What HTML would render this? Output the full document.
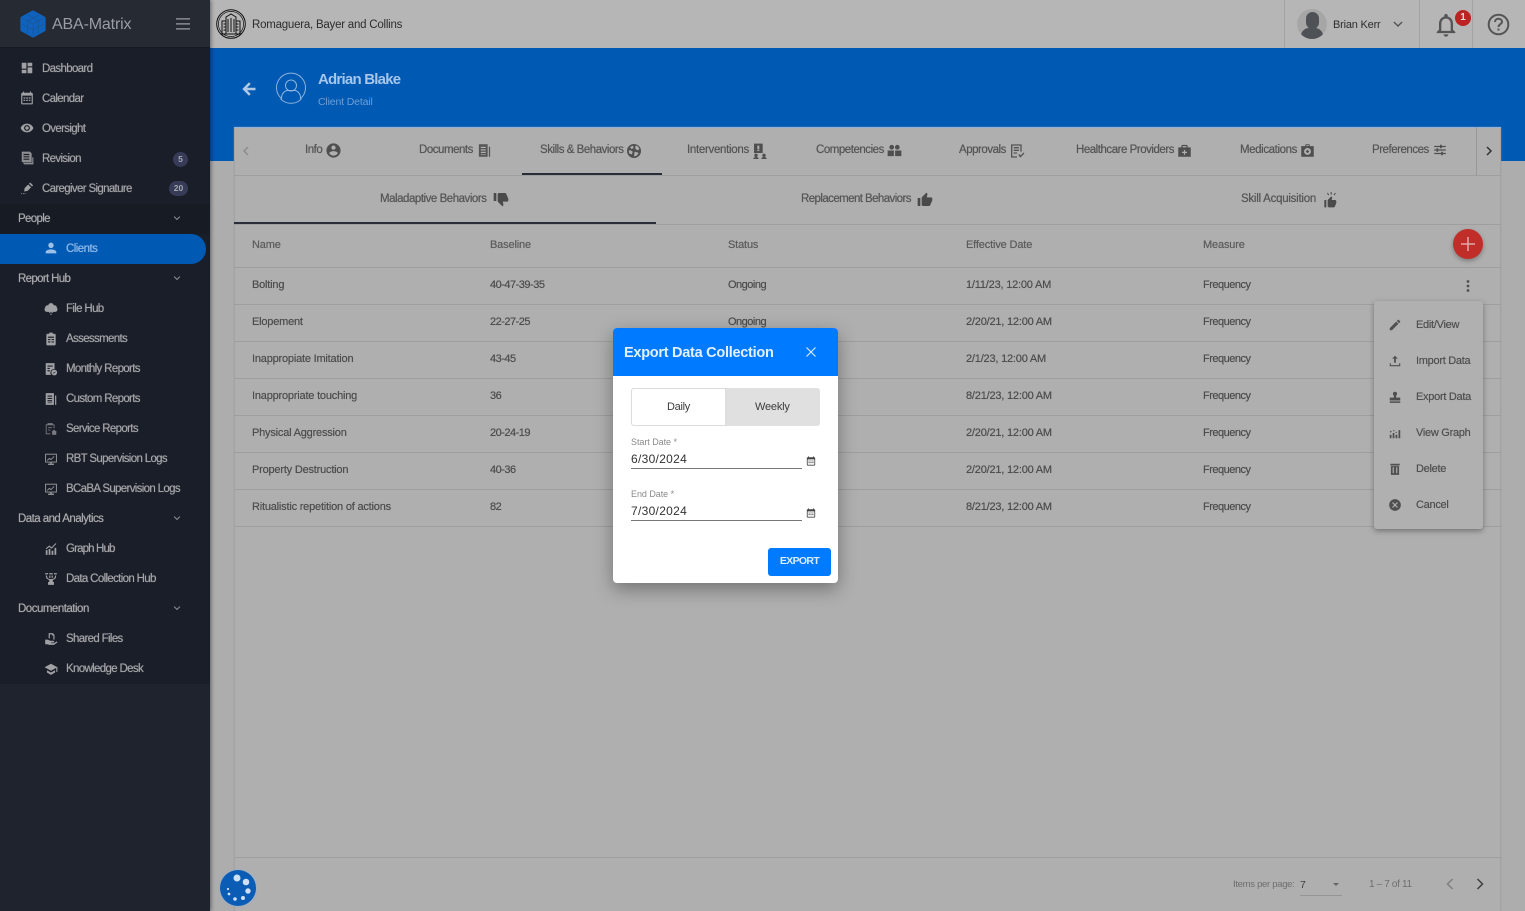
<!DOCTYPE html>
<html lang="en"><head><meta charset="utf-8"><title>ABA-Matrix</title>
<style>
html,body{margin:0;padding:0;width:1525px;height:911px;overflow:hidden;background:#adadad;font-family:"Liberation Sans",sans-serif}
.a{position:absolute}
.t{position:absolute;white-space:nowrap;line-height:14px;font-size:11.5px;letter-spacing:-.35px;margin-top:1px}
svg{position:absolute;overflow:visible}
.s{color:#a3a4a7;letter-spacing:-.66px;text-shadow:0 0 .6px currentColor}
.g{color:#a8a9ab;letter-spacing:-.66px;text-shadow:0 0 .6px currentColor}
.tab{color:#555;font-size:11.5px;letter-spacing:-.47px;text-shadow:0 0 .5px currentColor}
.td{color:#4d4d4d;font-size:11px;letter-spacing:-.2px;text-shadow:0 0 .4px currentColor}
.n{letter-spacing:-.5px}
.th{color:#5c5c5c;font-size:11px;letter-spacing:-.15px;text-shadow:0 0 .5px currentColor}
.ln{position:absolute;height:1px;background:#9e9e9e}
.m{color:#505050;font-size:11px;letter-spacing:-.28px;text-shadow:0 0 .4px currentColor}
</style></head><body>
<svg width="0" height="0" style="position:absolute"><defs>
<symbol id="dash" viewBox="0 0 24 24"><path d="M3 13h8V3H3v10zm0 8h8v-6H3v6zm10 0h8V11h-8v10zm0-18v6h8V3h-8z"/></symbol>
<symbol id="cal" viewBox="0 0 24 24"><path d="M20 3h-1V1h-2v2H7V1H5v2H4c-1.100 0-2 .9-2 2v16c0 1.100.9 2 2 2h16c1.100 0 2-.9 2-2V5c0-1.100-.9-2-2-2zm0 18H4V8h16v13zM6 11h3v2H6zm4.500 0h3v2h-3zm4.500 0h3v2h-3zM6 15h3v2H6zm4.500 0h3v2h-3zm4.500 0h3v2h-3z"/></symbol>
<symbol id="eye" viewBox="0 0 24 24"><path d="M12 4.500C7 4.500 2.730 7.610 1 12c1.730 4.390 6 7.500 11 7.500s9.270-3.110 11-7.500c-1.730-4.390-6-7.500-11-7.500zM12 17c-2.760 0-5-2.240-5-5s2.240-5 5-5 5 2.240 5 5-2.240 5-5 5zm0-8c-1.660 0-3 1.340-3 3s1.340 3 3 3 3-1.340 3-3-1.340-3-3-3z"/></symbol>
<symbol id="doc" viewBox="0 0 24 24"><path d="M3 1h14l3 3v15H3zm3 4v2h10V5zm0 4v2h10V9zm0 4v2h10v-2zM5 20h16v-9h2v12H7z"/></symbol>
<symbol id="sign" viewBox="0 0 24 24"><path d="M14 6l5 5-6 6-6 1 1-6zM15.500 4.500l2-2 5 5-2 2zM2 21h1.500v1.500H2zm3 0h1.500v1.500H5zm3 0h1.500v1.500H8z"/></symbol>
<symbol id="person" viewBox="0 0 24 24"><path d="M12 12c2.210 0 4-1.790 4-4s-1.790-4-4-4-4 1.790-4 4 1.790 4 4 4zm0 2c-2.670 0-8 1.340-8 4v2h16v-2c0-2.660-5.330-4-8-4z"/></symbol>
<symbol id="cloud" viewBox="0 0 24 24"><path d="M12 2a5 5 0 0 1 4.800 3.700A4 4 0 0 1 22 9.500a4 4 0 0 1 1 3.500 4 4 0 0 1-4 4h-3l-4 4-4-4H5a4 4 0 0 1-4-4 4 4 0 0 1 1-3.500 4 4 0 0 1 5.200-3.800A5 5 0 0 1 12 2zm-1 15v5h2v-5z"/></symbol>
<symbol id="clip" viewBox="0 0 24 24"><path d="M9 1h6v2h3a2 2 0 0 1 2 2v16a2 2 0 0 1-2 2H6a2 2 0 0 1-2-2V5a2 2 0 0 1 2-2h3zM7 8v2h10V8zm0 4v2h4v-2zm6 0v2h4v-2zm-6 4v2h4v-2zm6 0v2h4v-2z"/></symbol>
<symbol id="month" viewBox="0 0 24 24"><path d="M3 2h15v10a6.500 6.500 0 0 0-6 10H3zm3 4v2h9V6zm0 4v2h4v-2zm0 4v2h4v-2zm11.500-1a5 5 0 1 1 0 10 5 5 0 0 1 0-10zm-2.500 5l2 2 3-3-.7-.7-2.300 2.300-1.300-1.300z"/></symbol>
<symbol id="rep" viewBox="0 0 24 24"><path d="M3 2h14v20H3zm3 4v2h8V6zm0 4v2h8v-2zm0 4v2h8v-2zm0 4v1h8v-1zM19 6h2v16h-2z"/></symbol>
<symbol id="serv" viewBox="0 0 24 24" opacity=".7"><path d="M6 2h9v2h3v7h-1.500V5.500h-12v14H11V21H3V4h3zm1 7h7v1.500H7zm0 4h4v1.500H7zm10 0l5 4-1 1v4h-7v-4l-1-1z"/></symbol>
<symbol id="mon" viewBox="0 0 24 24"><path d="M2 3h20v15h-9v2h4v2H7v-2h4v-2H2zm1.500 1.500v12h17v-12zM5 14l4-4 3 2 5-5 1 1-6 6-3-2-3 3z"/></symbol>
<symbol id="graph" viewBox="0 0 24 24"><path d="M3 14h3v8H3zm5-2h3v10H8zm5 3h3v7h-3zm5-5h3v12h-3zM3 11l6-5 4 3 7-7 1.200 1.200L13 11.500 9 8.500 4 12.500z"/></symbol>
<symbol id="data" viewBox="0 0 24 24"><path d="M2 2h5v2H2zm7 0h6v2H9zm8 0h5v2h-5zM3 6h2l1 4 3 2h6l3-2 1-4h2l-1 5-5 3v3h2v5H7v-5h2v-3l-5-3zM9 6h2v4H9zm4 0h2v4h-2z"/></symbol>
<symbol id="share" viewBox="0 0 24 24"><path d="M8 2h7l3 3v8h-2V6h-2V4H10v7H8zM2 13h4l5 2h5a1.500 1.500 0 0 1 0 3h-4v1h5l5-3 1 2-6 4H9l-3-1H2z"/></symbol>
<symbol id="cap" viewBox="0 0 24 24"><path d="M12 3L1 9l11 6 9-4.900V17h2V9zM5 14.200V18l7 4 7-4v-3.800L12 18z"/></symbol>
<symbol id="acc" viewBox="0 0 24 24"><path d="M12 2C6.480 2 2 6.480 2 12s4.480 10 10 10 10-4.480 10-10S17.520 2 12 2zm0 3c1.660 0 3 1.340 3 3s-1.340 3-3 3-3-1.340-3-3 1.340-3 3-3zm0 14.200c-2.500 0-4.710-1.280-6-3.220.030-1.990 4-3.080 6-3.080 1.990 0 5.970 1.090 6 3.080-1.290 1.940-3.500 3.220-6 3.220z"/></symbol>
<symbol id="brain" viewBox="0 0 24 24"><path d="M12 1.500a10.500 10.500 0 1 1 0 21 10.500 10.500 0 0 1 0-21zM11 4L6 6l2 3 3-1zm3 0v5l4 2 2-2-2-4zM4 11l1 5 4 1 1-4-3-2zm9 2l-1 7 4-1 3-4-2-1z" fill-rule="evenodd"/></symbol>
<symbol id="interv" viewBox="0 0 24 24"><path d="M3 1h13v14H3zm5 3v5h3V4zm0 6v2h3v-2zM6 16a2.500 2.500 0 1 1 0 5 2.500 2.500 0 0 1 0-5zm-4 8c0-2 2-3 4-3s4 1 4 3zm16-8a2.500 2.500 0 1 1 0 5 2.500 2.500 0 0 1 0-5zm-4 8c0-2 2-3 4-3s4 1 4 3z"/></symbol>
<symbol id="group" viewBox="0 0 24 24"><path d="M7.500 3a3.800 3.800 0 1 1 0 7.600 3.800 3.800 0 0 1 0-7.600zm9 0a3.800 3.800 0 1 1 0 7.600 3.800 3.800 0 0 1 0-7.600zM1 12h10v9H1zm12 0h10v9H13z"/></symbol>
<symbol id="appr" viewBox="0 0 24 24"><path d="M3 2h16v11h-2V4H5v16h7v2H3zm4 4h8v2H7zm0 4h8v2H7zm0 4h5v2H7zm7 4l1.500-1.500 2 2 4.500-4.500L23 16l-6 6z"/></symbol>
<symbol id="bag" viewBox="0 0 24 24"><path d="M9 3h6a2 2 0 0 1 2 2v2h5v15H2V7h5V5a2 2 0 0 1 2-2zm0 2v2h6V5zm2 6v3H8v2h3v3h2v-3h3v-2h-3v-3z" fill-rule="evenodd"/></symbol>
<symbol id="med" viewBox="0 0 24 24"><path d="M9 2h6l1 3h6v17H2V5h6zm1 1.500V5h4V3.500zM12 8a5.500 5.500 0 1 0 0 11 5.500 5.500 0 0 0 0-11zm-1 3h2v1.500h1.500v2H13V16h-2v-1.500H9.500v-2H11z" fill-rule="evenodd"/></symbol>
<symbol id="tune" viewBox="0 0 24 24"><path d="M2 5h10V3h3v2h7v2h-7v2h-3V7H2zm0 6h4V9h3v2h13v2H9v2H6v-2H2zm0 6h12v-2h3v2h5v2h-5v2h-3v-2H2z"/></symbol>
<symbol id="down" viewBox="0 0 24 24"><path d="M15 3H6c-.83 0-1.540.5-1.840 1.220l-3.020 7.050c-.09.230-.14.470-.14.730v2c0 1.100.9 2 2 2h6.310l-.95 4.570-.03.320c0 .41.170.79.440 1.060L9.830 23l6.590-6.590c.36-.36.580-.86.580-1.410V5c0-1.100-.9-2-2-2zm4 0v12h4V3h-4z" transform="translate(24 0) scale(-1 1)"/></symbol>
<symbol id="up" viewBox="0 0 24 24"><path d="M1 21h4V9H1v12zm22-11c0-1.100-.9-2-2-2h-6.310l.95-4.570.03-.32c0-.41-.17-.79-.44-1.060L14.170 1 7.590 7.590C7.220 7.950 7 8.450 7 9v10c0 1.100.9 2 2 2h9c.83 0 1.540-.5 1.840-1.220l3.020-7.050c.09-.23.14-.47.14-.73v-2z"/></symbol>
<symbol id="up2" viewBox="0 0 24 24"><path d="M5 23h3V12H5zm18-9c0-1-.8-2-2-2h-5l.8-3.500c0-.4-.1-.8-.4-1L15.500 6.500 10 12v9c0 1 .9 2 2 2h7c.8 0 1.500-.5 1.800-1.200l2-5c.1-.3.2-.5.200-.8zM14.500 0h1.500v4h-1.500zM9 2l1.200-.8 2 3-1.200.8zm12-.8L22.200 2l-2 3-1.200-.8z"/></symbol>
<symbol id="edit" viewBox="0 0 24 24"><path d="M3 17.250V21h3.750L17.810 9.940l-3.750-3.750L3 17.250zM20.710 7.040c.39-.39.390-1.020 0-1.410l-2.340-2.340c-.39-.39-1.020-.39-1.410 0l-1.830 1.830 3.750 3.750 1.830-1.830z"/></symbol>
<symbol id="imp" viewBox="0 0 24 24"><path d="M12 3l5 5h-3.500v7h-3V8H7zM3 16h2v3h14v-3h2v5H3z"/></symbol>
<symbol id="exp" viewBox="0 0 24 24"><path d="M12 3a3.500 3.500 0 0 1 2 6.400V13h7v5H3v-5h7V9.400A3.500 3.500 0 0 1 12 3zM3 19.500h18V22H3z"/></symbol>
<symbol id="vg" viewBox="0 0 24 24"><path d="M3 15h3v6H3zm5-3h3v9H8zm5 3h3v6h-3zm5-8h3v14h-3zM3 10l2-2 1.500 1.500-2 2zm6-3h2v2H9zm4 3h2v2h-2z"/></symbol>
<symbol id="del" viewBox="0 0 24 24"><path d="M4 3h16v3H4zm1 4h14v15H5zm3 2v10h2V9zm6 0v10h2V9z"/></symbol>
<symbol id="can" viewBox="0 0 24 24"><path d="M12 2C6.470 2 2 6.470 2 12s4.470 10 10 10 10-4.470 10-10S17.530 2 12 2zm5 13.590L15.590 17 12 13.410 8.410 17 7 15.590 10.590 12 7 8.410 8.410 7 12 10.590 15.590 7 17 8.410 13.410 12 17 15.590z"/></symbol>
<symbol id="chev" viewBox="0 0 24 24"><path d="M5 8.500l7 7 7-7" fill="none" stroke="currentColor" stroke-width="2.400"/></symbol>
</defs></svg>

<!-- main -->
<div class="a" style="left:210px;top:48px;width:1315px;height:113px;background:#0059b2"></div>
<div class="a" style="left:210px;top:0;width:1315px;height:48px;background:#b6b6b6"></div>
<div class="a" style="left:1284px;top:0;width:1px;height:48px;background:#a3a3a3"></div>
<div class="a" style="left:1419px;top:0;width:1px;height:48px;background:#a3a3a3"></div>
<div class="a" style="left:1472px;top:0;width:1px;height:48px;background:#a3a3a3"></div>

<!-- company logo -->
<svg style="left:216px;top:9px" width="30" height="30" viewBox="0 0 30 30" fill="none" stroke="#111" stroke-width="1"><circle cx="15" cy="15" r="14.300"/><circle cx="15" cy="15" r="12.600" stroke-width=".7"/><path d="M10 25V8l5-3 5 3v17M6 25V12h4M20 12h4v13M5 25h20M12 10v13M15 9v14M18 10v13M7.500 15h2M7.500 18h2M7.500 21h2M20.500 15h2M20.500 18h2M20.500 21h2"/></svg>
<div class="t" style="left:252px;top:17px;color:#2d2d2d;font-size:11.5px;letter-spacing:-.23px">Romaguera, Bayer and Collins</div>

<!-- user -->
<div class="a" style="left:1297px;top:9px;width:30px;height:30px;border-radius:50%;background:#a6a6a6;overflow:hidden">
<div class="a" style="left:8.500px;top:3px;width:13px;height:17px;border-radius:6.500px;background:#4e5155"></div>
<div class="a" style="left:4px;top:19px;width:22px;height:12px;border-radius:8px 8px 0 0;background:#4e5155"></div></div>
<div class="t" style="left:1333px;top:17px;color:#2d2d2d;font-size:11px;letter-spacing:-.2px">Brian Kerr</div>
<svg style="left:1391px;top:17px;color:#555" width="14" height="14"><use href="#chev"/></svg>
<svg style="left:1432px;top:11px" width="28" height="28" viewBox="0 0 24 24" fill="#555"><path d="M12 22c1.100 0 2-.9 2-2h-4c0 1.100.9 2 2 2zm6-6v-5c0-3.070-1.630-5.640-4.500-6.320V4c0-.83-.67-1.500-1.500-1.500s-1.500.67-1.500 1.500v.68C7.640 5.360 6 7.920 6 11v5l-2 2v1h16v-1l-2-2zm-2 1H8v-6c0-2.480 1.510-4.500 4-4.500s4 2.020 4 4.500v6z"/></svg>
<div class="a" style="left:1455px;top:10px;width:16px;height:16px;border-radius:50%;background:#bc2323;color:#ddd;font-size:10px;font-weight:bold;line-height:16px;text-align:center">1</div>
<svg style="left:1487px;top:13px" width="23" height="23" viewBox="0 0 23 23" fill="none" stroke="#555" stroke-width="2"><circle cx="11.500" cy="11.500" r="9.800"/><path d="M8 9c0-2 1.500-3.200 3.500-3.200S15 7 15 8.700c0 2.500-3.500 2.500-3.500 5.300M11.500 15.500v2"/></svg>

<!-- title area -->
<svg style="left:240px;top:80px" width="18" height="18" viewBox="0 0 24 24" fill="#b0c8e4" stroke="#b0c8e4" stroke-width="1.300"><path d="M20 11H7.830l5.590-5.590L12 4l-8 8 8 8 1.410-1.410L7.830 13H20v-2z"/></svg>
<svg style="left:276px;top:74px" width="30" height="30" viewBox="0 0 30 30" fill="none" stroke="#8fb5e0" stroke-width="1"><path d="M24 25A14.500 14.500 0 1 0 6 25"/><path d="M4.500 24.800a14.500 14.500 0 0 0 21 0"/><circle cx="15" cy="11.500" r="5.500"/><path d="M5.500 24c0-5 4-7.500 6-7.500h7c2.500 0 6 2.500 6 7.500"/></svg>
<div class="t" style="left:318px;top:71px;color:#a7c6ea;font-size:15px;line-height:16px;font-weight:bold;letter-spacing:-.78px">Adrian Blake</div>
<div class="t" style="left:318px;top:94px;color:#6f9fd8;font-size:10.500px;letter-spacing:-.15px">Client Detail</div>

<!-- card -->
<div class="a" style="left:234px;top:127px;width:1267px;height:784px;background:#afafaf;box-shadow:0 0 1px #999;border-right:1px solid #a3a3a3;border-left:1px solid #a3a3a3;box-sizing:border-box"></div>
<div class="a" style="left:234px;top:127px;width:1267px;height:1px;background:#8eb4de"></div>
<div class="ln" style="left:234px;top:175px;width:1267px"></div>
<div class="ln" style="left:234px;top:224px;width:1267px"></div>
<div class="ln" style="left:234px;top:267px;width:1267px"></div>
<div class="ln" style="left:234px;top:304px;width:1267px"></div>
<div class="ln" style="left:234px;top:341px;width:1267px"></div>
<div class="ln" style="left:234px;top:378px;width:1267px"></div>
<div class="ln" style="left:234px;top:415px;width:1267px"></div>
<div class="ln" style="left:234px;top:452px;width:1267px"></div>
<div class="ln" style="left:234px;top:489px;width:1267px"></div>
<div class="ln" style="left:234px;top:526px;width:1267px"></div>
<div class="ln" style="left:234px;top:857px;width:1267px"></div>
<div class="a" style="left:1476px;top:127px;width:1px;height:48px;background:#989898"></div>

<!-- tabs -->
<svg style="left:240px;top:145px;color:#8a8a8a" width="12" height="12" viewBox="0 0 12 12" fill="none" stroke="currentColor" stroke-width="1.400"><path d="M8 2L4 6l4 4"/></svg>
<svg style="left:1483px;top:145px" width="12" height="12" viewBox="0 0 12 12" fill="none" stroke="#333" stroke-width="1.500"><path d="M4 2l4 4-4 4"/></svg>
<div class="t tab" style="left:305px;top:142px">Info</div><svg style="left:325px;top:142px" width="17" height="17" fill="#4f4f4f"><use href="#acc"/></svg>
<div class="t tab" style="left:419px;top:142px">Documents</div><svg style="left:477px;top:143px" width="15" height="15" fill="#555"><use href="#rep"/></svg>
<div class="t tab" style="left:540px;top:142px">Skills &amp; Behaviors</div><svg style="left:626px;top:143px" width="16" height="16" fill="#4f4f4f"><use href="#brain"/></svg>
<div class="t tab" style="left:687px;top:142px;letter-spacing:-.3px">Interventions</div><svg style="left:752px;top:143px" width="16" height="16" fill="#4f4f4f"><use href="#interv"/></svg>
<div class="t tab" style="left:816px;top:142px">Competencies</div><svg style="left:887px;top:143px" width="15" height="15" fill="#4f4f4f"><use href="#group"/></svg>
<div class="t tab" style="left:959px;top:142px">Approvals</div><svg style="left:1009px;top:143px" width="16" height="16" fill="#555"><use href="#appr"/></svg>
<div class="t tab" style="left:1076px;top:142px">Healthcare Providers</div><svg style="left:1177px;top:143px" width="15" height="15" fill="#4f4f4f"><use href="#bag"/></svg>
<div class="t tab" style="left:1240px;top:142px;letter-spacing:-.4px">Medications</div><svg style="left:1300px;top:143px" width="15" height="15" fill="#4f4f4f"><use href="#med"/></svg>
<div class="t tab" style="left:1372px;top:142px">Preferences</div><svg style="left:1433px;top:143px" width="14" height="14" fill="#4f4f4f"><use href="#tune"/></svg>
<div class="a" style="left:522px;top:173px;width:140px;height:2px;background:#2a2d38"></div>

<!-- sub tabs -->
<div class="t tab" style="left:380px;top:191px">Maladaptive Behaviors</div><svg style="left:493px;top:191px" width="16" height="16" fill="#4a4a4a"><use href="#down"/></svg>
<div class="t tab" style="left:801px;top:191px;letter-spacing:-.58px">Replacement Behaviors</div><svg style="left:917px;top:192px" width="16" height="16" fill="#4a4a4a"><use href="#up"/></svg>
<div class="t tab" style="left:1241px;top:191px;letter-spacing:-.25px">Skill Acquisition</div><svg style="left:1321px;top:192px" width="16" height="16" fill="#4a4a4a"><use href="#up2"/></svg>
<div class="a" style="left:234px;top:222px;width:422px;height:2px;background:#2a2d38"></div>

<!-- table -->
<div class="t th" style="left:252px;top:237px">Name</div>
<div class="t th" style="left:490px;top:237px">Baseline</div>
<div class="t th" style="left:728px;top:237px">Status</div>
<div class="t th" style="left:966px;top:237px">Effective Date</div>
<div class="t th" style="left:1203px;top:237px">Measure</div>
<div class="a" style="left:1453px;top:229px;width:30px;height:30px;border-radius:50%;background:#c12e29;box-shadow:0 2px 5px rgba(0,0,0,.3)"></div>
<svg style="left:1460px;top:236px" width="16" height="16" fill="none" stroke="#e0a9a7" stroke-width="1.500"><path d="M8 1v14M1 8h14"/></svg>

<div class="t td" style="left:252px;top:277px">Bolting</div><div class="t td n" style="left:490px;top:277px">40-47-39-35</div><div class="t td n" style="left:728px;top:277px">Ongoing</div><div class="t td" style="left:966px;top:277px">1/11/23, 12:00 AM</div><div class="t td n" style="left:1203px;top:277px">Frequency</div>
<div class="t td" style="left:252px;top:314px">Elopement</div><div class="t td n" style="left:490px;top:314px">22-27-25</div><div class="t td n" style="left:728px;top:314px">Ongoing</div><div class="t td" style="left:966px;top:314px">2/20/21, 12:00 AM</div><div class="t td n" style="left:1203px;top:314px">Frequency</div>
<div class="t td" style="left:252px;top:351px">Inappropiate Imitation</div><div class="t td n" style="left:490px;top:351px">43-45</div><div class="t td" style="left:966px;top:351px">2/1/23, 12:00 AM</div><div class="t td n" style="left:1203px;top:351px">Frequency</div>
<div class="t td" style="left:252px;top:388px">Inappropriate touching</div><div class="t td n" style="left:490px;top:388px">36</div><div class="t td" style="left:966px;top:388px">8/21/23, 12:00 AM</div><div class="t td n" style="left:1203px;top:388px">Frequency</div>
<div class="t td" style="left:252px;top:425px">Physical Aggression</div><div class="t td n" style="left:490px;top:425px">20-24-19</div><div class="t td" style="left:966px;top:425px">2/20/21, 12:00 AM</div><div class="t td n" style="left:1203px;top:425px">Frequency</div>
<div class="t td" style="left:252px;top:462px">Property Destruction</div><div class="t td n" style="left:490px;top:462px">40-36</div><div class="t td" style="left:966px;top:462px">2/20/21, 12:00 AM</div><div class="t td n" style="left:1203px;top:462px">Frequency</div>
<div class="t td" style="left:252px;top:499px">Ritualistic repetition of actions</div><div class="t td n" style="left:490px;top:499px">82</div><div class="t td" style="left:966px;top:499px">8/21/23, 12:00 AM</div><div class="t td n" style="left:1203px;top:499px">Frequency</div>
<svg style="left:1464px;top:279px" width="8" height="14" fill="#505050"><circle cx="4" cy="2.500" r="1.400"/><circle cx="4" cy="7" r="1.400"/><circle cx="4" cy="11.500" r="1.400"/></svg>

<!-- context menu -->
<div class="a" style="left:1374px;top:301px;width:109px;height:228px;background:#b0b0b0;border-radius:3px;box-shadow:0 2px 6px rgba(0,0,0,.35)"></div>
<svg style="left:1388px;top:318px" width="14" height="14" fill="#4f4f4f"><use href="#edit"/></svg><div class="t m" style="left:1416px;top:317px">Edit/View</div>
<svg style="left:1388px;top:354px" width="14" height="14" fill="#4f4f4f"><use href="#imp"/></svg><div class="t m" style="left:1416px;top:353px">Import Data</div>
<svg style="left:1388px;top:390px" width="14" height="14" fill="#4f4f4f"><use href="#exp"/></svg><div class="t m" style="left:1416px;top:389px">Export Data</div>
<svg style="left:1388px;top:426px" width="14" height="14" fill="#4f4f4f"><use href="#vg"/></svg><div class="t m" style="left:1416px;top:425px">View Graph</div>
<svg style="left:1388px;top:462px" width="14" height="14" fill="#4f4f4f"><use href="#del"/></svg><div class="t m" style="left:1416px;top:461px">Delete</div>
<svg style="left:1388px;top:498px" width="14" height="14" fill="#4f4f4f"><use href="#can"/></svg><div class="t m" style="left:1416px;top:497px">Cancel</div>

<!-- paginator -->
<div class="t" style="left:1233px;top:877px;color:#6e6e6e;font-size:9.500px;letter-spacing:-.3px">Items per page:</div>
<div class="t" style="left:1300px;top:877px;color:#3d3d3d;font-size:10.500px">7</div>
<div class="a" style="left:1333px;top:883px;border:3.500px solid transparent;border-top:3.500px solid #666;border-bottom:0"></div>
<div class="a" style="left:1300px;top:895px;width:42px;height:1px;background:#959595"></div>
<div class="t" style="left:1369px;top:877px;color:#6e6e6e;font-size:10px;letter-spacing:-.35px">1 – 7 of 11</div>
<svg style="left:1444px;top:878px" width="12" height="12" viewBox="0 0 12 12" fill="none" stroke="#7e7e7e" stroke-width="1.500"><path d="M8.500 1L3.500 6l5 5"/></svg>
<svg style="left:1474px;top:878px" width="12" height="12" viewBox="0 0 12 12" fill="none" stroke="#3f3f3f" stroke-width="1.500"><path d="M3.500 1l5 5-5 5"/></svg>

<!-- cookie -->
<div class="a" style="left:220px;top:870px;width:36px;height:36px;border-radius:50%;background:#0b5cb5;box-shadow:0 0 1px 1px rgba(143,178,216,.55)"></div>
<svg style="left:220px;top:870px" width="36" height="36" fill="#cfe0f3"><circle cx="17" cy="8" r="3.500"/><circle cx="26" cy="12" r="3.300"/><circle cx="28" cy="21" r="2.700"/><circle cx="23" cy="28" r="2"/><circle cx="15" cy="29" r="1.800"/><circle cx="9" cy="24" r="1.400"/><circle cx="8" cy="19" r="1.100"/></svg>

<!-- modal -->
<div class="a" style="left:613px;top:328px;width:225px;height:255px;background:#fff;border-radius:4px;box-shadow:0 6px 18px rgba(0,0,0,.35);overflow:hidden">
<div class="a" style="left:0;top:0;width:225px;height:48px;background:#007bff"></div></div>
<div class="t" style="left:624px;top:344px;color:#e3f0ff;font-size:14.500px;line-height:16px;font-weight:bold;letter-spacing:-.27px">Export Data Collection</div>
<svg style="left:806px;top:347px" width="10" height="10" fill="none" stroke="#d5e8ff" stroke-width="1.200"><path d="M.5.500l9 9M9.500.500l-9 9"/></svg>
<div class="a" style="left:631px;top:388px;width:189px;height:38px;background:#e0e0e0;border-radius:3px"></div>
<div class="a" style="left:631px;top:388px;width:93px;height:36px;background:#fff;border:1px solid #dcdcdc;border-radius:3px 0 0 3px"></div>
<div class="t" style="left:667px;top:399px;color:#3c3c3c;font-size:11px;letter-spacing:-.3px">Daily</div>
<div class="t" style="left:755px;top:399px;color:#3c3c3c;font-size:11px;letter-spacing:-.2px">Weekly</div>
<div class="t" style="left:631px;top:434px;color:#8a8a8a;font-size:9px;letter-spacing:-.05px">Start Date *</div>
<div class="t" style="left:631px;top:451px;color:#333;font-size:12px;letter-spacing:.3px">6/30/2024</div>
<div class="a" style="left:631px;top:468px;width:171px;height:1px;background:#777"></div>
<svg style="left:806px;top:456px" width="10" height="10" fill="#444"><use href="#cal"/></svg>
<div class="t" style="left:631px;top:486px;color:#8a8a8a;font-size:9px;letter-spacing:-.05px">End Date *</div>
<div class="t" style="left:631px;top:503px;color:#333;font-size:12px;letter-spacing:.3px">7/30/2024</div>
<div class="a" style="left:631px;top:520px;width:171px;height:1px;background:#777"></div>
<svg style="left:806px;top:508px" width="10" height="10" fill="#444"><use href="#cal"/></svg>
<div class="a" style="left:768px;top:548px;width:63px;height:28px;background:#007bff;border-radius:3px;color:#dcecff;font-size:10.500px;font-weight:bold;line-height:27px;text-align:center;letter-spacing:-.65px">EXPORT</div>

<!-- sidebar -->
<div class="a" style="left:0;top:0;width:210px;height:911px;background:#1e232d;box-shadow:1px 0 4px rgba(0,0,0,.45)"></div>
<div class="a" style="left:0;top:0;width:210px;height:48px;background:#262a33;border-bottom:1px solid #171a21;box-sizing:border-box"></div>
<div class="a" style="left:0;top:48px;width:210px;height:636px;background:#1a1e28"></div>
<svg style="left:19px;top:10px" width="28" height="28" viewBox="0 0 30 30"><path d="M15 2l12 6.500v13L15 28 3 21.500v-13z" fill="#0f62bd" stroke="#0f62bd" stroke-width="3" stroke-linejoin="round"/><path d="M3 8.500l12 6.500 12-6.500M15 15v13M9 5.300l12 6.500M21 5.300L9 11.800M9 11.800v13M21 11.800v13M3 15l12 6.500L27 15" stroke="#1c5596" stroke-width=".8" fill="none"/></svg>
<div class="t" style="left:52px;top:16px;color:#9b9da3;font-size:16px;line-height:16px;letter-spacing:-.15px">ABA-Matrix</div>
<svg style="left:176px;top:18px" width="14" height="12" fill="#7d7f85"><rect width="14" height="1.700"/><rect y="5" width="14" height="1.700"/><rect y="10" width="14" height="1.700"/></svg>

<svg style="left:20px;top:61px" width="14" height="14" fill="#a0a1a4"><use href="#dash"/></svg><div class="t s" style="left:42px;top:61px">Dashboard</div>
<svg style="left:20px;top:91px" width="14" height="14" fill="#a0a1a4"><use href="#cal"/></svg><div class="t s" style="left:42px;top:91px">Calendar</div>
<svg style="left:20px;top:121px" width="14" height="14" fill="#a0a1a4"><use href="#eye"/></svg><div class="t s" style="left:42px;top:121px">Oversight</div>
<svg style="left:20px;top:151px" width="14" height="14" fill="#8d8e91"><use href="#doc"/></svg><div class="t s" style="left:42px;top:151px">Revision</div>
<svg style="left:20px;top:181px" width="14" height="14" fill="#a0a1a4"><use href="#sign"/></svg><div class="t s" style="left:42px;top:181px">Caregiver Signature</div>
<div class="a" style="left:173px;top:152px;width:15px;height:15px;border-radius:50%;background:#373b58;color:#a6a8b0;font-size:8.500px;font-weight:bold;line-height:15px;text-align:center">5</div>
<div class="a" style="left:169px;top:181px;width:19px;height:15px;border-radius:8px;background:#373b58;color:#a6a8b0;font-size:8.500px;font-weight:bold;line-height:15px;text-align:center">20</div>

<div class="a" style="left:0;top:204px;width:210px;height:30px;background:#171b24"></div>
<div class="t g" style="left:18px;top:211px">People</div>
<svg style="left:172px;top:213px;color:#95969a" width="10" height="10"><use href="#chev"/></svg>
<div class="a" style="left:0;top:234px;width:206px;height:30px;background:#0059b2;border-radius:0 15px 15px 0"></div>
<svg style="left:43px;top:240px" width="16" height="16" fill="#9fc0e6"><use href="#person"/></svg>
<div class="t" style="left:66px;top:241px;color:#8fb9ea;letter-spacing:-.55px;text-shadow:0 0 .6px currentColor">Clients</div>

<div class="t g" style="left:18px;top:271px">Report Hub</div>
<svg style="left:172px;top:273px;color:#95969a" width="10" height="10"><use href="#chev"/></svg>
<svg style="left:44px;top:302px" width="14" height="14" fill="#a0a1a4"><use href="#cloud"/></svg><div class="t s" style="left:66px;top:301px">File Hub</div>
<svg style="left:44px;top:332px" width="14" height="14" fill="#a0a1a4"><use href="#clip"/></svg><div class="t s" style="left:66px;top:331px">Assessments</div>
<svg style="left:44px;top:362px" width="14" height="14" fill="#a0a1a4"><use href="#month"/></svg><div class="t s" style="left:66px;top:361px">Monthly Reports</div>
<svg style="left:44px;top:392px" width="14" height="14" fill="#a0a1a4"><use href="#rep"/></svg><div class="t s" style="left:66px;top:391px">Custom Reports</div>
<svg style="left:44px;top:422px" width="14" height="14" fill="#a0a1a4"><use href="#serv"/></svg><div class="t s" style="left:66px;top:421px">Service Reports</div>
<svg style="left:44px;top:452px" width="14" height="14" fill="#a0a1a4"><use href="#mon"/></svg><div class="t s" style="left:66px;top:451px">RBT Supervision Logs</div>
<svg style="left:44px;top:482px" width="14" height="14" fill="#a0a1a4"><use href="#mon"/></svg><div class="t s" style="left:66px;top:481px">BCaBA Supervision Logs</div>
<div class="t g" style="left:18px;top:511px;letter-spacing:-.55px">Data and Analytics</div>
<svg style="left:172px;top:513px;color:#95969a" width="10" height="10"><use href="#chev"/></svg>
<svg style="left:44px;top:542px" width="14" height="14" fill="#a0a1a4"><use href="#graph"/></svg><div class="t s" style="left:66px;top:541px;letter-spacing:-.85px">Graph Hub</div>
<svg style="left:44px;top:572px" width="14" height="14" fill="#a0a1a4"><use href="#data"/></svg><div class="t s" style="left:66px;top:571px">Data Collection Hub</div>
<div class="t g" style="left:18px;top:601px;letter-spacing:-.5px">Documentation</div>
<svg style="left:172px;top:603px;color:#95969a" width="10" height="10"><use href="#chev"/></svg>
<svg style="left:44px;top:632px" width="14" height="14" fill="#a0a1a4"><use href="#share"/></svg><div class="t s" style="left:66px;top:631px">Shared Files</div>
<svg style="left:44px;top:662px" width="14" height="14" fill="#a0a1a4"><use href="#cap"/></svg><div class="t s" style="left:66px;top:661px">Knowledge Desk</div>
</body></html>
